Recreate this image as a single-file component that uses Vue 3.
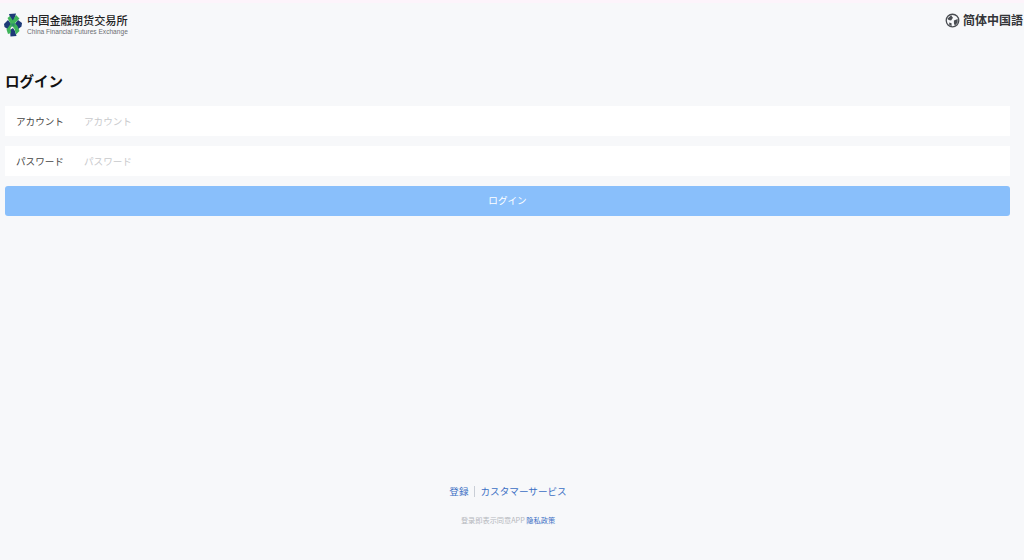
<script setup>
const fields = [
  { label: 'アカウント', placeholder: 'アカウント' },
  { label: 'パスワード', placeholder: 'パスワード' }
]
</script>

<template>
  <div class="page">
    <header class="top">
      <div class="logo">
        <svg class="mark" viewBox="0 0 18 24" width="18" height="24">
          <path d="M5 1 L12 0.5 L10 7 L9 9 L7 7 Z" fill="#1d3a78" />
          <path d="M0 11 L4 7 L8 12 L5 17 L0.5 14 Z" fill="#1d3a78" />
          <path d="M18 10 L14 7 L10 12 L13 17 L17.5 13.5 Z" fill="#1d3a78" />
          <path d="M6 17 L9 15 L11 18 L12.5 23 L6.5 23.5 Z" fill="#1d3a78" />
          <path d="M12 2 L15.5 5.5 L10 11 L6.5 15 L7 20 L4 21 L2.5 16.5 L7 10.5 Z" fill="#3fb45a" />
          <path d="M3.5 5 L6 3 L9.5 8.5 L13.5 13 L15.5 18 L12 21.5 L10.5 16 L6.5 10.5 Z" fill="#3fb45a" />
          <path d="M7.5 10.5 L10.5 10.5 L10.5 13.5 L7.5 13.5 Z" fill="#2f8f6a" />
        </svg>
        <div class="logo-text">
          <div class="logo-cn">中国金融期货交易所</div>
          <div class="logo-en">China Financial Futures Exchange</div>
        </div>
      </div>
      <div class="lang">
        <svg viewBox="0 0 16 16" width="15" height="15">
          <circle cx="8" cy="8" r="6.7" fill="none" stroke="#4a4d52" stroke-width="1.4" />
          <path d="M2.5 6 L6.5 2.5 L8.5 5 L6.5 8 L4 7.5 Z M9.5 8 L13.5 6.5 L13.5 10 L10.5 13.5 L9.5 11 Z M4.5 10 L7 11 L7 14 L4.5 12.5 Z" fill="#4a4d52" />
        </svg>
        <span>简体中国語</span>
      </div>
    </header>

    <main class="main">
      <h1 class="title">ログイン</h1>
      <form class="form" @submit.prevent>
        <label v-for="f in fields" :key="f.label" class="field">
          <span class="label">{{ f.label }}</span>
          <input class="input" type="text" :placeholder="f.placeholder" />
        </label>
        <button class="submit" type="button">ログイン</button>
      </form>
    </main>

    <footer class="foot">
      <div class="links">
        <a class="link">登録</a>
        <i class="sep"></i>
        <a class="link">カスタマーサービス</a>
      </div>
      <div class="policy">登录即表示同意APP <a class="link-small">隐私政策</a></div>
    </footer>
  </div>
</template>

<style>
html, body { margin: 0; background: #f7f8fa; }
</style>

<style scoped>
.page {
  height: 560px;
  box-sizing: border-box;
  display: flex;
  flex-direction: column;
  background: #f7f8fa;
  border-top: 3px solid #fdf4fb;
  font-family: "Noto Sans CJK JP", "Noto Sans", sans-serif;
  overflow: hidden;
}
.top {
  height: 37px;
  display: flex;
  align-items: flex-start;
  justify-content: space-between;
  padding: 7px 1px 0 4px;
  box-sizing: border-box;
}
.logo { display: flex; align-items: flex-start; gap: 5px; }
.mark { margin-top: 3px; }
.logo-text { margin-top: 3px; }
.logo-cn {
  font-family: "Noto Sans CJK SC", sans-serif;
  font-size: 11.2px;
  line-height: 14px;
  font-weight: 500;
  color: #222;
  white-space: nowrap;
}
.logo-en {
  font-family: "Liberation Sans", sans-serif;
  font-size: 6.6px;
  line-height: 10px;
  color: #6c6f73;
  white-space: nowrap;
}
.lang {
  display: flex;
  align-items: center;
  gap: 3px;
  font-family: "Noto Sans CJK SC", sans-serif;
  font-size: 12px;
  line-height: 20px;
  font-weight: 700;
  color: #333538;
}
.main { padding: 0 14px 0 5px; }
.title {
  margin: 31px 0 15px;
  font-size: 14.5px;
  line-height: 20px;
  font-weight: 700;
  color: #111;
}
.form { display: flex; flex-direction: column; gap: 10px; }
.field {
  height: 30px;
  display: flex;
  align-items: center;
  background: #fff;
  padding: 0 11px 1px;
  box-sizing: border-box;
}
.label {
  width: 68px;
  flex: none;
  font-size: 9.6px;
  color: #444;
}
.input {
  flex: 1;
  border: 0;
  outline: 0;
  background: transparent;
  padding: 0;
  font: inherit;
  font-size: 9.6px;
}
.input::placeholder { color: #c8c9cc; }
.submit {
  height: 30px;
  border: 0;
  border-radius: 3px;
  background: #89bffb;
  color: #fff;
  font: inherit;
  font-size: 9.6px;
  padding: 0 0 2px;
}
.foot {
  margin-top: auto;
  padding-bottom: 34px;
  padding-right: 8px;
  text-align: center;
}
.links {
  display: flex;
  justify-content: center;
  align-items: center;
  gap: 5.5px;
  font-size: 9.6px;
  line-height: 16px;
  color: #3b6fc4;
}
.sep { width: 1px; height: 11px; background: #c9ced6; }
.policy {
  margin-top: 15px;
  font-size: 7.2px;
  line-height: 12px;
  color: #b4b7bc;
}
.link-small { color: #3b6fc4; }
</style>
